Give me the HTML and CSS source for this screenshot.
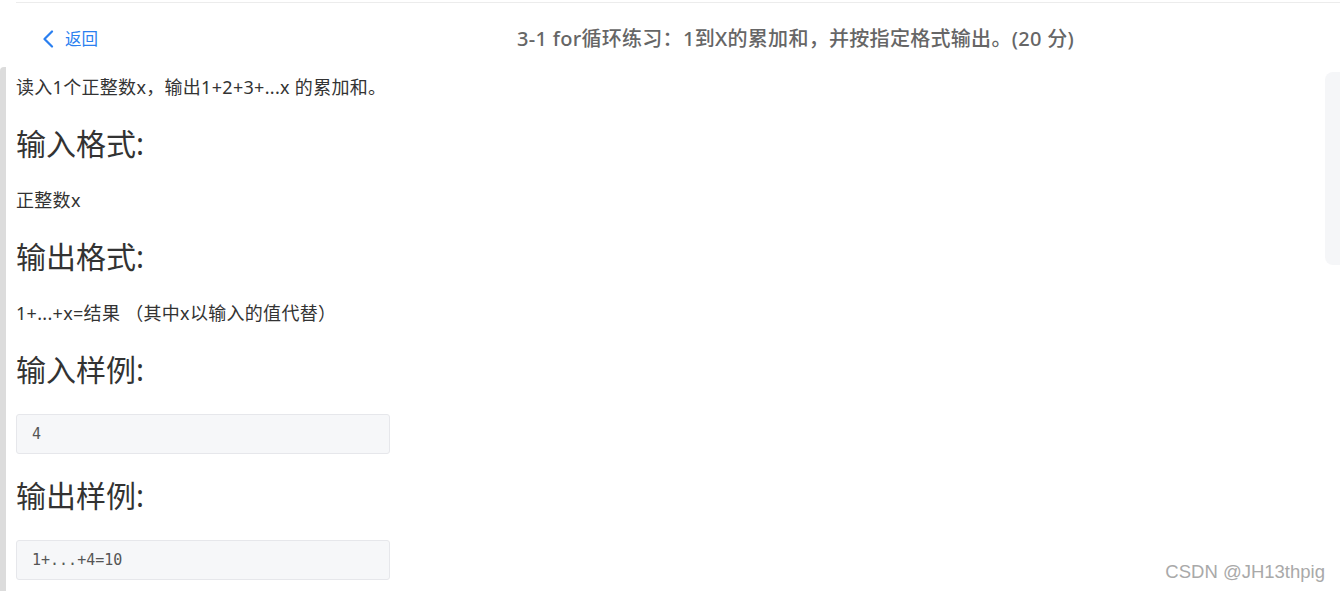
FILE: index.html
```html
<!DOCTYPE html>
<html lang="zh-CN">
<head>
<meta charset="utf-8">
<title>3-1 for循环练习</title>
<link rel="stylesheet" href="styles.css">
</head>
<body>
<header class="topbar">
  <a class="back" href="#">
    <svg class="back-icon" width="12" height="18" viewBox="0 0 12 18" aria-hidden="true">
      <path d="M10 1.5 L2.5 9 L10 16.5" fill="none" stroke="currentColor" stroke-width="2.2" stroke-linecap="round" stroke-linejoin="round"/>
    </svg>
    <span>返回</span>
  </a>
  <h1 class="title">3-1 for循环练习：1到X的累加和，并按指定格式输出。(20 分)</h1>
</header>
<main class="main">
  <div class="left-bar"></div>
  <article class="content">
    <p class="text">读入1个正整数x，输出1+2+3+...x 的累加和。</p>
    <h2 class="heading">输入格式:</h2>
    <p class="text">正整数x</p>
    <h2 class="heading">输出格式:</h2>
    <p class="text">1+...+x=结果 （其中x以输入的值代替）</p>
    <h2 class="heading">输入样例:</h2>
    <pre class="sample">4</pre>
    <h2 class="heading">输出样例:</h2>
    <pre class="sample">1+...+4=10</pre>
  </article>
  <aside class="side-panel"></aside>
</main>
<div class="watermark">CSDN @JH13thpig</div>
</body>
</html>
```
FILE: styles.css
```css
html, body {
  margin: 0;
  padding: 0;
  background: #fff;
  height: 100%;
  overflow: hidden;
}
body {
  font-family: "Noto Sans", "Noto Sans CJK SC", sans-serif;
  color: #333;
  position: relative;
}
.topbar {
  margin: 2px 0 0 16px;
  border-top: 1px solid #ececec;
  height: 65px;
  box-sizing: border-box;
  padding-top: 24px;
  display: flex;
  align-items: flex-start;
}
.back {
  display: flex;
  align-items: center;
  gap: 11px;
  margin-left: 26px;
  color: #2a7ff0;
  text-decoration: none;
  font-size: 16.5px;
  line-height: 24px;
  height: 24px;
}
.back-icon {
  display: block;
}
.title {
  margin: 0 0 0 419px;
  font-size: 20px;
  line-height: 24px;
  font-weight: 500;
  letter-spacing: 0.3px;
  color: #666;
  white-space: nowrap;
}
.main {
  display: flex;
  align-items: flex-start;
  height: calc(100% - 68px);
}
.left-bar {
  width: 6px;
  align-self: stretch;
  background: #dcdcdc;
  border-top-left-radius: 4px;
}
.content {
  flex: 1;
  padding: 8px 0 0 10px;
}
.text {
  margin: 0;
  font-size: 18px;
  line-height: 24px;
  letter-spacing: 0.3px;
  color: #333;
}
.heading {
  margin: 25px 0 24px;
  font-size: 30px;
  line-height: 40px;
  font-weight: normal;
  color: #333;
}
.sample + .heading {
  margin-top: 22px;
}
.sample {
  margin: 0;
  width: 374px;
  height: 40px;
  box-sizing: border-box;
  padding: 0 15px;
  border: 1px solid #e6e7eb;
  border-radius: 3px;
  background: #f6f7f9;
  font-family: "DejaVu Sans Mono", monospace;
  font-size: 15px;
  line-height: 38px;
  color: #555;
}
.side-panel {
  width: 15px;
  height: 193px;
  margin-top: 5px;
  background: #f5f6f8;
  border-radius: 8px 0 0 8px;
}
.watermark {
  position: absolute;
  right: 15px;
  bottom: 8px;
  font-family: "Liberation Sans", Arial, sans-serif;
  font-size: 18.5px;
  line-height: 24px;
  color: #a9a9a9;
}
```
